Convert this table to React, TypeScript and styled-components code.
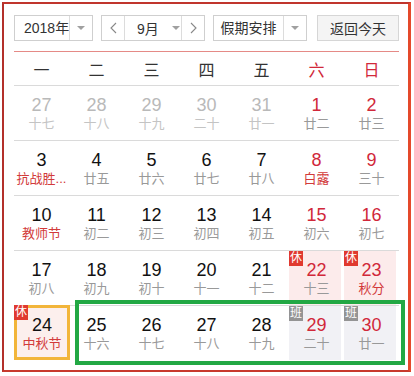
import React from "react";
import styled, { createGlobalStyle } from "styled-components";

const Global = createGlobalStyle`
  html, body { margin: 0; padding: 0; background: #fff; }
  body { font-family: "Liberation Sans", "Noto Sans CJK SC", sans-serif; color: #222; }
`;

const RED = "#d1283a";
const LUNAR_RED = "#d23a3a";

const Frame = styled.div`
  box-sizing: border-box;
  width: 409px;
  height: 370px;
  margin: 2px;
  border-style: solid;
  border-width: 2px 3px 2px 2px;
  border-color: #c0352d #e4492b #c8392d #b3302a;
  padding: 11px 9px 0 10px;
`;

const Toolbar = styled.div`
  display: flex;
  height: 26px;
  white-space: nowrap;
`;

const Box = styled.div<{ $w: number; $ml?: number }>`
  box-sizing: border-box;
  display: flex;
  width: ${(p) => p.$w}px;
  height: 26px;
  margin-left: ${(p) => p.$ml ?? 0}px;
  border: 1px solid #cfcfcf;
  background: #fff;
  font-size: 14px;
  color: #333;
`;

const Label = styled.div<{ $w: number; $center?: boolean }>`
  flex: 0 0 ${(p) => p.$w}px;
  display: flex;
  align-items: center;
  justify-content: ${(p) => (p.$center ? "center" : "flex-start")};
  padding-left: ${(p) => (p.$center ? 0 : 9)}px;
  box-sizing: border-box;
  line-height: 24px;
  white-space: nowrap;
`;

const ArrowPart = styled.div`
  flex: 1;
  display: flex;
  align-items: center;
  justify-content: center;
  border-left: 1px solid #dcdcdc;
`;

const Caret = styled.span`
  width: 0;
  height: 0;
  border-left: 4px solid transparent;
  border-right: 4px solid transparent;
  border-top: 4px solid #a0a0a0;
`;

const NavBtn = styled.div<{ $side: "left" | "right" }>`
  flex: 0 0 22px;
  display: flex;
  align-items: center;
  justify-content: center;
  ${(p) => (p.$side === "left" ? "border-right" : "border-left")}: 1px solid #dcdcdc;
`;

const MonthLabel = styled.div`
  flex: 1;
  display: flex;
  align-items: center;
  padding-left: 12px;
  gap: 13px;
  white-space: nowrap;
`;

const TodayBtn = styled.div`
  box-sizing: border-box;
  width: 82px;
  height: 26px;
  margin-left: 10px;
  border: 1px solid #d6d6d6;
  background: #f4f4f4;
  display: flex;
  align-items: center;
  justify-content: center;
  font-size: 14px;
  color: #333;
`;

const Calendar = styled.div`
  margin-top: 10px;
  border-top: 1px solid #e58a86;
  width: 385px;
`;

const Grid = styled.div<{ $h: number; $last?: boolean }>`
  display: grid;
  grid-template-columns: repeat(7, 55px);
  height: ${(p) => p.$h}px;
  border-bottom: ${(p) => (p.$last ? "none" : "1px solid #dadada")};
  position: relative;
`;

const WeekName = styled.div<{ $red?: boolean }>`
  display: flex;
  align-items: center;
  justify-content: center;
  font-size: 16px;
  color: ${(p) => (p.$red ? RED : "#333")};
`;

type Kind = "normal" | "rest" | "work" | "today";

const bgFor = (k: Kind) =>
  k === "rest" ? "#fcebeb" : k === "work" ? "#f1f1f5" : "transparent";

const Cell = styled.div<{ $kind: Kind }>`
  position: relative;
  display: flex;
  flex-direction: column;
  align-items: center;
  padding-top: 9px;
  box-sizing: border-box;
  background: linear-gradient(${(p) => bgFor(p.$kind)}, ${(p) => bgFor(p.$kind)}) no-repeat;
  background-size: 52px 100%;
`;

const TodayCell = styled.div`
  position: relative;
  box-sizing: border-box;
  width: 56px;
  height: 55px;
  margin-top: -1px;
  border: 3px solid #f2b53a;
  background: #fcefed;
  display: flex;
  flex-direction: column;
  align-items: center;
  padding-top: 7px;
`;

const Num = styled.div<{ $c: string }>`
  font-size: 18px;
  line-height: 20px;
  color: ${(p) => p.$c};
`;

const Lunar = styled.div<{ $c: string }>`
  font-size: 13px;
  line-height: 18px;
  color: ${(p) => p.$c};
  white-space: nowrap;
`;

const Badge = styled.span<{ $work?: boolean; $inset?: number }>`
  position: absolute;
  top: ${(p) => p.$inset ?? 0}px;
  left: ${(p) => p.$inset ?? 0}px;
  width: 14px;
  height: 15px;
  background: ${(p) => (p.$work ? "#949494" : "#e0392f")};
  color: #fff;
  font-size: 12px;
  line-height: 15px;
  text-align: center;
`;

const GreenMark = styled.div`
  position: absolute;
  left: 61px;
  top: -6px;
  width: 330px;
  height: 65px;
  box-sizing: border-box;
  border: 4px solid #22a844;
  pointer-events: none;
`;

type Day = {
  n: number;
  l: string;
  other?: boolean;
  redNum?: boolean;
  redLunar?: boolean;
  kind?: Kind;
};

const weeks: Day[][] = [
  [
    { n: 27, l: "十七", other: true },
    { n: 28, l: "十八", other: true },
    { n: 29, l: "十九", other: true },
    { n: 30, l: "二十", other: true },
    { n: 31, l: "廿一", other: true },
    { n: 1, l: "廿二", redNum: true },
    { n: 2, l: "廿三", redNum: true },
  ],
  [
    { n: 3, l: "抗战胜...", redLunar: true },
    { n: 4, l: "廿五" },
    { n: 5, l: "廿六" },
    { n: 6, l: "廿七" },
    { n: 7, l: "廿八" },
    { n: 8, l: "白露", redNum: true, redLunar: true },
    { n: 9, l: "三十", redNum: true },
  ],
  [
    { n: 10, l: "教师节", redLunar: true },
    { n: 11, l: "初二" },
    { n: 12, l: "初三" },
    { n: 13, l: "初四" },
    { n: 14, l: "初五" },
    { n: 15, l: "初六", redNum: true },
    { n: 16, l: "初七", redNum: true },
  ],
  [
    { n: 17, l: "初八" },
    { n: 18, l: "初九" },
    { n: 19, l: "初十" },
    { n: 20, l: "十一" },
    { n: 21, l: "十二" },
    { n: 22, l: "十三", redNum: true, kind: "rest" },
    { n: 23, l: "秋分", redNum: true, redLunar: true, kind: "rest" },
  ],
  [
    { n: 24, l: "中秋节", redLunar: true, kind: "today" },
    { n: 25, l: "十六" },
    { n: 26, l: "十七" },
    { n: 27, l: "十八" },
    { n: 28, l: "十九" },
    { n: 29, l: "二十", redNum: true, kind: "work" },
    { n: 30, l: "廿一", redNum: true, kind: "work" },
  ],
];

const numColor = (d: Day) => (d.other ? "#b9b9b9" : d.redNum ? RED : "#111");
const lunarColor = (d: Day) =>
  d.other ? "#c4c4c4" : d.redLunar ? LUNAR_RED : "#999";

const Chevron = ({ dir }: { dir: "l" | "r" }) => (
  <svg width="7" height="12" viewBox="0 0 7 12">
    <polyline
      points={dir === "l" ? "6,1 1,6 6,11" : "1,1 6,6 1,11"}
      fill="none"
      stroke="#888"
      strokeWidth="1.1"
    />
  </svg>
);

const DayCell = ({ d }: { d: Day }) => {
  const kind = d.kind ?? "normal";
  if (kind === "today") {
    return (
      <TodayCell>
        <Badge $inset={-3}>休</Badge>
        <Num $c="#111">{d.n}</Num>
        <Lunar $c={LUNAR_RED}>{d.l}</Lunar>
      </TodayCell>
    );
  }
  return (
    <Cell $kind={kind}>
      {kind === "rest" && <Badge>休</Badge>}
      {kind === "work" && <Badge $work>班</Badge>}
      <Num $c={numColor(d)}>{d.n}</Num>
      <Lunar $c={lunarColor(d)}>{d.l}</Lunar>
    </Cell>
  );
};

const names = ["一", "二", "三", "四", "五", "六", "日"];

export default function App() {
  return (
    <>
      <Global />
      <Frame>
        <Toolbar>
          <Box $w={79}>
            <Label $w={54}>2018年</Label>
            <ArrowPart>
              <Caret />
            </ArrowPart>
          </Box>
          <Box $w={104} $ml={8}>
            <NavBtn $side="left">
              <Chevron dir="l" />
            </NavBtn>
            <MonthLabel>
              <span>9月</span>
              <Caret />
            </MonthLabel>
            <NavBtn $side="right">
              <Chevron dir="r" />
            </NavBtn>
          </Box>
          <Box $w={94} $ml={8}>
            <Label $w={69} $center>
              假期安排
            </Label>
            <ArrowPart>
              <Caret />
            </ArrowPart>
          </Box>
          <TodayBtn>返回今天</TodayBtn>
        </Toolbar>
        <Calendar>
          <Grid $h={33}>
            {names.map((n, i) => (
              <WeekName key={n} $red={i >= 5}>
                {n}
              </WeekName>
            ))}
          </Grid>
          {weeks.map((w, i) => (
            <Grid key={i} $h={54} $last={i === weeks.length - 1}>
              {w.map((d) => (
                <DayCell key={d.n + "-" + i} d={d} />
              ))}
              {i === weeks.length - 1 && <GreenMark />}
            </Grid>
          ))}
        </Calendar>
      </Frame>
    </>
  );
}
